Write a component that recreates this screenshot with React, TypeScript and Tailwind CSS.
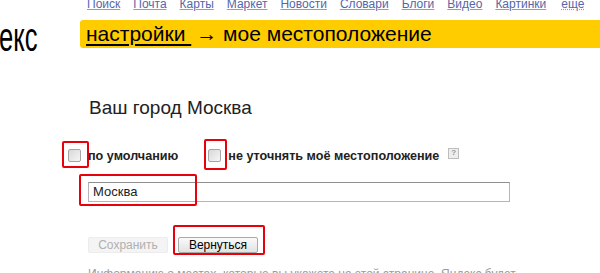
import React from "react";

const navLinks = ["Поиск", "Почта", "Карты", "Маркет", "Новости", "Словари", "Блоги", "Видео", "Картинки"];

function Box() {
  return (
    <span className="inline-block w-[13px] h-[13px] border border-[#a5a5a5] rounded-[2px] bg-gradient-to-br from-[#d8d8d8] to-[#f6f6f6] shrink-0" />
  );
}

export default function App() {
  return (
    <div
      className="relative w-[600px] h-[273px] overflow-hidden bg-white text-[#222]"
      style={{ fontFamily: '"Liberation Sans", Arial, sans-serif' }}
    >
      {/* top nav */}
      <div className="h-[22px] flex items-start pl-[87px] gap-[13px] text-[12px] leading-[13px] -mt-[2px]">
        {navLinks.map((l) => (
          <span key={l} className="text-[#5566aa] underline decoration-[#8d9acb]">
            {l}
          </span>
        ))}
        <span className="ml-[2px] text-[#5566aa] underline decoration-dotted decoration-[#8d9acb]">еще</span>
      </div>

      {/* logo + yellow bar */}
      <div className="flex h-[28px]">
        <div className="w-[80px] relative">
          <span
            className="absolute left-[-1px] top-[-3px] text-[40px] leading-[40px] text-black origin-left"
            style={{ transform: "scaleX(0.64)" }}
          >
            екс
          </span>
        </div>
        <div className="flex-1 bg-[#ffcc00] rounded-l-[3px] flex items-center pl-[6px] text-[21px] leading-[28px] text-black">
          <span className="underline decoration-2 underline-offset-[3px] whitespace-pre">настройки </span>
          <span className="ml-[5px] whitespace-pre">→ мое местоположение</span>
        </div>
      </div>

      {/* body */}
      <div className="pl-[88px]">
        <div className="mt-[49px] text-[19px] leading-[22px] text-[#222] pl-[1px]">Ваш город Москва</div>

        <div className="mt-[27px] h-[20px] flex items-center text-[12.6px] font-bold text-[#222]">
          <div className="flex items-center -ml-[20px]">
            <Box />
            <span className="ml-[7px]">по умолчанию</span>
          </div>
          <div className="flex items-center ml-[30px]">
            <Box />
            <span className="ml-[7px]">не уточнять моё местоположение</span>
            <span className="ml-[9px] inline-flex items-center justify-center w-[11px] h-[11px] border border-[#bdbdbd] bg-[#eeeeee] text-[8px] leading-none font-bold text-[#999] -mt-[5px]">
              ?
            </span>
          </div>
        </div>

        <div className="mt-[16px] w-[422px] h-[20px] border border-[#b5b5b5] border-t-[#8f8f8f] bg-white flex items-center pl-[4px] text-[13px] text-[#222]">
          Москва
        </div>

        <div className="mt-[35px] flex items-center text-[12px]">
          <div className="w-[80px] h-[16px] bg-[#f4f4f4] border border-[#ececec] rounded-[2px] flex items-center justify-center text-[#b0b0b0]">
            Сохранить
          </div>
          <div className="ml-[10px] w-[80px] h-[16px] border border-[#a9a9a9] rounded-[2px] bg-gradient-to-b from-[#fafafa] to-[#e2e2e2] flex items-center justify-center text-black">
            Вернуться
          </div>
        </div>

        <div className="mt-[13px] text-[12px] leading-[16px] text-[#9a9a9a] whitespace-nowrap">
          Информацию о местах, которые вы укажете на этой странице, Яндекс будет
        </div>
      </div>

      {/* red annotation boxes */}
      <div className="absolute left-[62px] top-[141px] w-[27px] h-[27px] border-2 border-[#e8000b] rounded-[2px]" />
      <div className="absolute left-[204px] top-[139px] w-[23px] h-[31px] border-2 border-[#e8000b] rounded-[2px]" />
      <div className="absolute left-[79px] top-[174px] w-[118px] h-[32px] border-2 border-[#e8000b] rounded-[2px]" />
      <div className="absolute left-[173px] top-[225px] w-[92px] h-[30px] border-2 border-[#e8000b] rounded-[2px]" />
    </div>
  );
}
